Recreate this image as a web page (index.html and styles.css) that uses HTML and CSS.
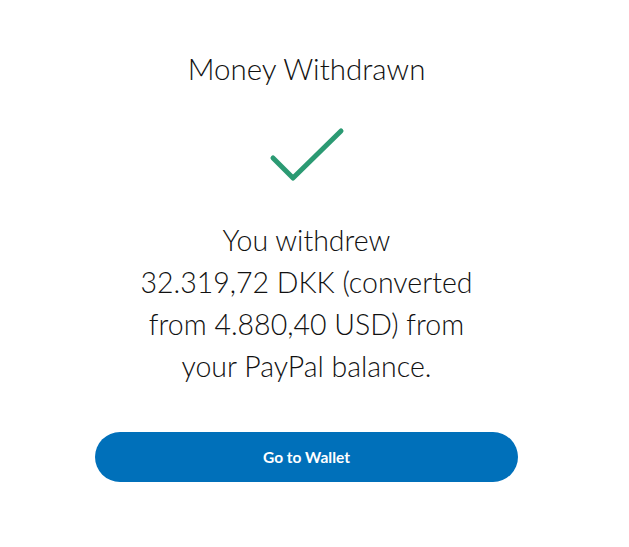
FILE: index.html
```html
<!DOCTYPE html>
<html>
<head>
  <meta charset="UTF-8">
  <title>Money Withdrawn</title>
  <link rel="stylesheet" href="styles.css">
</head>
<body>
<div class="panel">
  <h1 class="title">Money Withdrawn</h1>
  <div class="check">
    <svg width="80" height="60" viewBox="0 0 80 60">
      <path d="M6 33 L26 53 L74 6" fill="none" stroke="#2b9a73" stroke-width="5" stroke-linecap="round" stroke-linejoin="round"/>
    </svg>
  </div>
  <p class="message">You withdrew<br>32.319,72 DKK (converted<br>from 4.880,40 USD) from<br>your PayPal balance.</p>
  <button type="button" class="wallet-btn">Go to Wallet</button>
</div>
</body>
</html>
```

FILE: styles.css
```css
body {
  margin: 0;
  background: #fff;
  font-family: Lato, "Open Sans", sans-serif;
  color: #2c2e2f;
}

.panel {
  width: 423px;
  margin-left: 95px;
  padding-top: 50px;
  display: flex;
  flex-direction: column;
  align-items: center;
}

.title {
  margin: 0;
  font-size: 29.5px;
  font-weight: 300;
  line-height: 38px;
  color: #111;
}

.check {
  margin-top: 37px;
  height: 60px;
}

.check svg {
  display: block;
}

.message {
  margin: 34px 0 0;
  font-size: 28.5px;
  font-weight: 300;
  line-height: 42px;
  text-align: center;
  color: #111;
}

.wallet-btn {
  margin-top: 45px;
  width: 423px;
  height: 50px;
  border: none;
  border-radius: 25px;
  background: #0070ba;
  color: #fff;
  font-family: Lato, "Open Sans", sans-serif;
  font-size: 15.5px;
  font-weight: bold;
  cursor: pointer;
}
```
